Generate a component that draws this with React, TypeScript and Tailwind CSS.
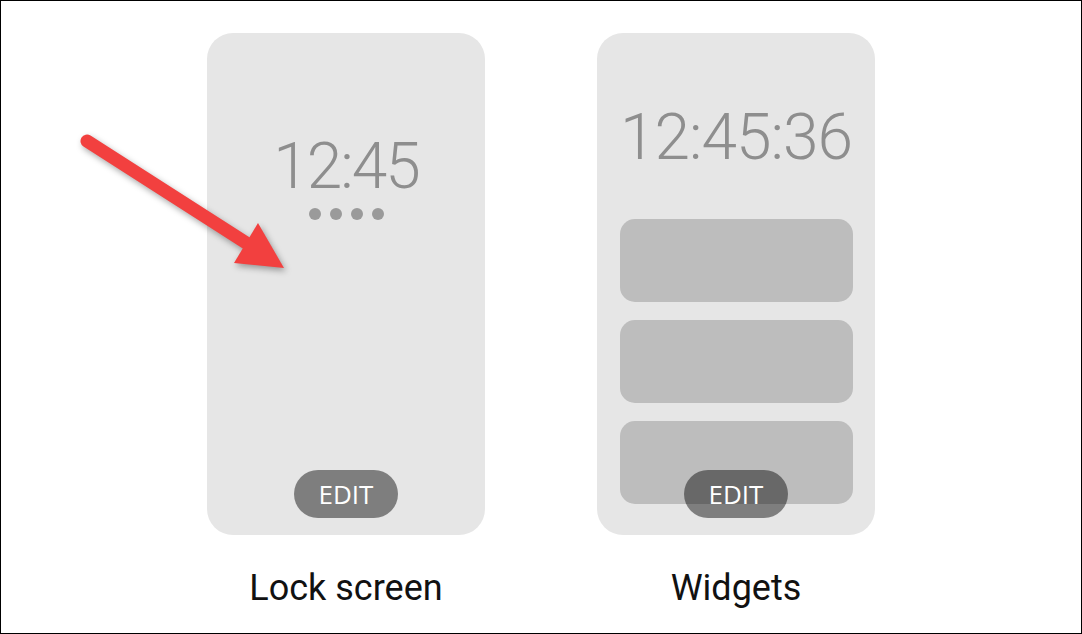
export default function App() {
  return (
    <div className="relative h-[634px] w-[1082px] overflow-hidden border border-black bg-white">
      <div className="flex justify-center gap-[112px] pt-[32px]">
        <div className="flex w-[278px] flex-col items-center">
          <div className="relative flex h-[502px] w-[278px] flex-col items-center rounded-[26px] bg-[#e6e6e6]">
            <div className="mt-[102px] font-['Roboto'] text-[64px] font-light leading-none tracking-[-2px] text-[#8e8e8e]">
              12:45
            </div>
            <div className="mt-[9px] flex gap-[9px]">
              <span className="h-[12px] w-[12px] rounded-full bg-[#9a9a9a]" />
              <span className="h-[12px] w-[12px] rounded-full bg-[#9a9a9a]" />
              <span className="h-[12px] w-[12px] rounded-full bg-[#9a9a9a]" />
              <span className="h-[12px] w-[12px] rounded-full bg-[#9a9a9a]" />
            </div>
            <EditButton />
          </div>
          <div className="mt-[35px] font-['Roboto'] text-[36px] leading-none text-[#111]">Lock screen</div>
        </div>

        <div className="flex w-[278px] flex-col items-center">
          <div className="relative flex h-[502px] w-[278px] flex-col items-center rounded-[26px] bg-[#e6e6e6]">
            <div className="mt-[73px] font-['Roboto'] text-[64px] font-light leading-none tracking-[-1px] text-[#8e8e8e]">
              12:45:36
            </div>
            <div className="mt-[49px] flex w-[233px] flex-col gap-[18px]">
              <div className="h-[83px] rounded-[15px] bg-[#bdbdbd]" />
              <div className="h-[83px] rounded-[15px] bg-[#bdbdbd]" />
              <div className="h-[83px] rounded-[15px] bg-[#bdbdbd]" />
            </div>
            <EditButton />
          </div>
          <div className="mt-[35px] font-['Roboto'] text-[36px] leading-none text-[#111]">Widgets</div>
        </div>
      </div>

      {/* red annotation arrow */}
      <svg
        className="pointer-events-none absolute left-0 top-0"
        width="1082"
        height="634"
        viewBox="0 0 1082 634"
        style={{ filter: "drop-shadow(2px 3px 3px rgba(0,0,0,0.35))" }}
      >
        <line x1="86" y1="140" x2="250" y2="245" stroke="#f2403f" strokeWidth="13" strokeLinecap="round" />
        <polygon points="283,267 233,262 257,222" fill="#f2403f" />
      </svg>
    </div>
  );
}

function EditButton() {
  return (
    <div className="absolute bottom-[17px] left-1/2 flex h-[48px] w-[104px] -translate-x-1/2 items-center justify-center rounded-full bg-black/45 font-['Open_Sans'] text-[26px] leading-none text-white">
      EDIT
    </div>
  );
}
